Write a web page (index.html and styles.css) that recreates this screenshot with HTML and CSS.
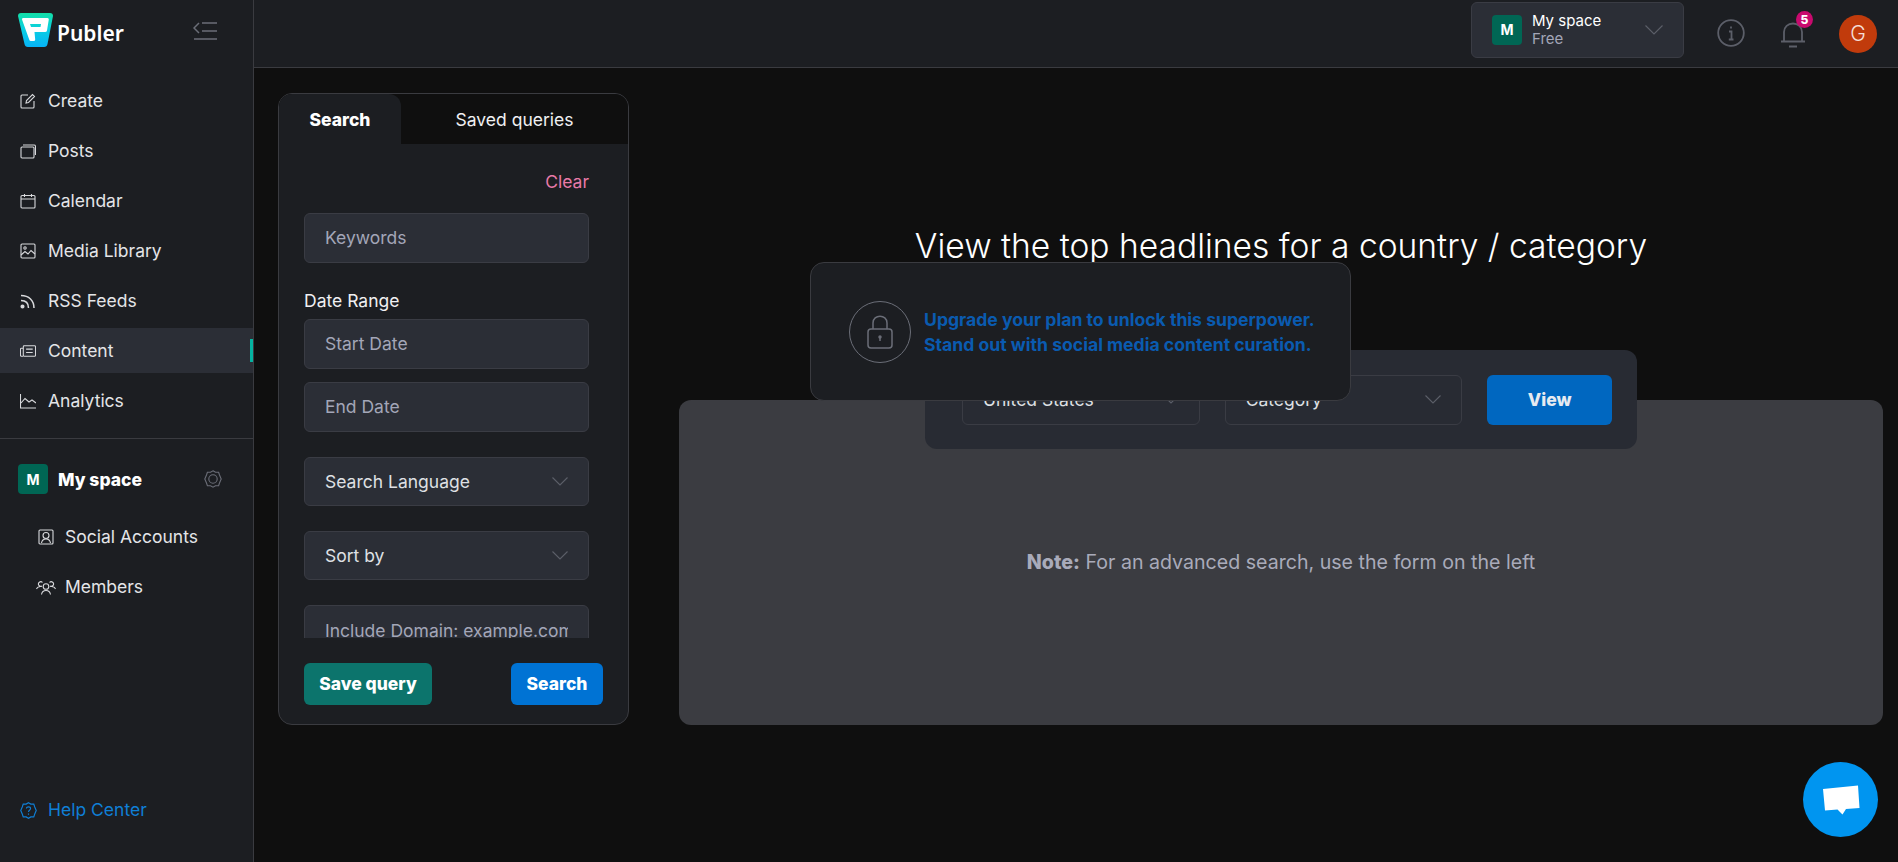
FILE: index.html
```html
<!DOCTYPE html>
<html lang="en">
<head>
	<meta charset="UTF-8">
	<title>Publer - Content</title>
	<link rel="stylesheet" href="styles.css">
</head>
<body>
	<aside class="sidebar">
		<div class="brand">
			<svg class="logo" viewBox="0 0 35 34">
				<defs>
					<linearGradient id="logograd" x1="0" y1="0" x2="0" y2="1">
						<stop offset="0" stop-color="#12dfa6"/>
						<stop offset="0.45" stop-color="#0bd0e0"/>
						<stop offset="1" stop-color="#06b4f8"/>
					</linearGradient>
				</defs>
				<path d="M3 0H32Q35 0 35 3L29.5 31Q29 34 26 34H10Q7 34 6.500 31L0 3Q0 0 3 0Z" fill="url(#logograd)"/>
				<path fill-rule="evenodd" d="M5 5H29.500Q31 5 30.800 6.500L29 17.500Q28.800 19 27 19H16.500L17.200 26.500Q17.300 28 15.500 28H13Q11.500 28 11.200 26.500L4 6.500Q3.800 5 5 5ZM12 11L13 14H22.500L23 11Z" fill="#fff"/>
			</svg>
			<span class="brand-name">Publer</span>
			<svg class="collapse" viewBox="0 0 24 18" fill="none" stroke="#6b6e78" stroke-width="1.500">
				<path d="M6 1L1 6L6 11M9 1H24M9 9H24M1 17H24"/>
			</svg>
		</div>
		<nav class="nav">
			<a class="nav-item">
				<svg class="ico" viewBox="0 0 16 16"><path d="M8 2H2Q1 2 1 3V14Q1 15 2 15H13Q14 15 14 14V8M6 10L6.500 7.500L12.500 1.500L14.500 3.500L8.500 9.500Z"/></svg>
				Create
			</a>
			<a class="nav-item">
				<svg class="ico" viewBox="0 0 16 16"><rect x="1" y="4" width="13" height="11" rx="1"/><path d="M3 2H14Q15.500 2 15.500 3.500V12"/></svg>
				Posts
			</a>
			<a class="nav-item">
				<svg class="ico" viewBox="0 0 16 16"><rect x="1" y="2.500" width="14" height="12.500" rx="1"/><path d="M1 6H15M4.500 1V4M11.500 1V4"/></svg>
				Calendar
			</a>
			<a class="nav-item">
				<svg class="ico" viewBox="0 0 16 16"><rect x="1" y="1" width="14" height="14" rx="1"/><circle cx="5" cy="5" r="1.200"/><path d="M1 12L5 8.500L8 11L11 7.500L15 11"/></svg>
				Media Library
			</a>
			<a class="nav-item">
				<svg class="ico ico-thick" viewBox="0 0 16 16"><circle cx="2.500" cy="13.500" r="1.300" fill="#d8d9dc"/><path d="M1 7.500C6 7.500 8.500 10 8.500 15M1 2.500C9 2.500 14 7.500 14 15"/></svg>
				RSS Feeds
			</a>
			<a class="nav-item active">
				<svg class="ico" viewBox="0 0 17 16"><rect x="3.500" y="2.500" width="13" height="11" rx="1"/><path d="M3.500 5H1.500Q.5 5 .5 6V12.500Q.5 13.500 1.500 13.500H3.500M6.500 6H13.500M6.500 9.500H13.500"/></svg>
				Content
				<span class="marker"></span>
			</a>
			<a class="nav-item">
				<svg class="ico" viewBox="0 0 16 16"><path d="M.5 1V15H16M1 10L5 5.500L9 9L12 7L16 10"/></svg>
				Analytics
			</a>
		</nav>
		<div class="divider"></div>
		<div class="space-row">
			<span class="tile">M</span>
			<span class="space-name">My space</span>
			<svg class="gear" viewBox="0 0 18 18" fill="none" stroke="#6b6e78" stroke-width="1.100">
				<path d="M9 .8L11.500 2.200L14.600 2.300L15.500 5L17.200 9L15.500 13L14.600 15.700L11.500 15.800L9 17.200L6.500 15.800L3.400 15.700L2.500 13L.8 9L2.500 5L3.400 2.300L6.500 2.200Z"/>
				<circle cx="9" cy="9" r="4.200"/>
			</svg>
		</div>
		<nav class="subnav">
			<a class="nav-item">
				<svg class="ico" viewBox="0 0 16 16"><rect x="1" y="1" width="14" height="14" rx="1"/><circle cx="8" cy="6.500" r="3"/><path d="M3.500 14C4 11 6 10 8 10S12 11 12.500 14"/></svg>
				Social Accounts
			</a>
			<a class="nav-item">
				<svg class="ico ico-wide" viewBox="0 0 20 16"><circle cx="10" cy="7.500" r="2.800"/><path d="M5.500 15.500C6 12.500 8 11.500 10 11.500S14 12.500 14.500 15.500M6 7A2.300 2.300 0 1 1 6.500 3.500M14 7A2.300 2.300 0 1 0 13.500 3.500M.5 10C1 8.500 2.500 7.500 4 7.800M19.500 10C19 8.500 17.500 7.500 16 7.800"/></svg>
				Members
			</a>
		</nav>
		<a class="help">
			<svg class="help-ico" viewBox="0 0 18 18" fill="none" stroke="#0f7fd6" stroke-width="1.200">
				<path d="M9 .8L11.500 2.200L14.600 2.300L15.500 5L17.200 9L15.500 13L14.600 15.700L11.500 15.800L9 17.200L6.500 15.800L3.400 15.700L2.500 13L.8 9L2.500 5L3.400 2.300L6.500 2.200Z"/>
				<path d="M6.800 7C6.800 4.500 11.200 4.500 11.200 7C11.200 8.800 9 8.800 9 10.500M9 12.200V13.400"/>
			</svg>
			Help Center
		</a>
	</aside>

	<div class="main">
		<header class="topbar">
			<div class="switcher">
				<span class="tile">M</span>
				<div class="switcher-text">
					<span class="switcher-name">My space</span>
					<span class="switcher-plan">Free</span>
				</div>
				<svg class="chev chev-big" viewBox="0 0 18 10"><path d="M.5 .5L9 9L17.500 .5"/></svg>
			</div>
			<svg class="info" viewBox="0 0 28 28" fill="none" stroke="#5c5f69" stroke-width="1.800">
				<circle cx="14" cy="14" r="12.800"/>
				<path d="M12 12.500H14.500V20M11.800 20.500H16.500M14 7.500V9.500"/>
			</svg>
			<div class="bell">
				<svg class="bell-ico" viewBox="0 0 26 28" fill="none" stroke="#5c5f69" stroke-width="1.800">
					<path d="M1 21.500H25M4 21.500V12C4 7 8 3.500 13 3.500S22 7 22 12V21.500M9 26.500H17"/>
				</svg>
				<span class="badge">5</span>
			</div>
			<span class="avatar">G</span>
		</header>

		<div class="content">
			<section class="panel">
				<div class="tabs">
					<span class="tab tab-on">Search</span>
					<span class="tab">Saved queries</span>
				</div>
				<div class="form">
					<div class="clear-row">Clear</div>
					<div class="field">Keywords</div>
					<div class="label">Date Range</div>
					<div class="field">Start Date</div>
					<div class="field field-next">End Date</div>
					<div class="field field-select">Search Language
						<svg class="chev" viewBox="0 0 16 9"><path d="M.5 .5L8 8L15.500 .5"/></svg>
					</div>
					<div class="field field-select">Sort by
						<svg class="chev" viewBox="0 0 16 9"><path d="M.5 .5L8 8L15.500 .5"/></svg>
					</div>
					<div class="field field-last"><span class="clip">Include Domain: example.com</span></div>
				</div>
				<div class="panel-foot">
					<span class="btn btn-green">Save query</span>
					<span class="btn btn-blue">Search</span>
				</div>
			</section>

			<section class="results">
				<h1 class="headline">View the top headlines for a country / category</h1>
				<div class="filter">
					<div class="pick">United States
						<svg class="chev" viewBox="0 0 16 9"><path d="M.5 .5L8 8L15.500 .5"/></svg>
					</div>
					<div class="pick">Category
						<svg class="chev" viewBox="0 0 16 9"><path d="M.5 .5L8 8L15.500 .5"/></svg>
					</div>
					<span class="btn-view">View</span>
				</div>
				<div class="note-card">
					<p class="note"><b>Note:</b> For an advanced search, use the form on the left</p>
				</div>
				<div class="upgrade">
					<span class="lock">
						<svg class="lock-ico" viewBox="0 0 26 34" fill="none" stroke="#6b6e78" stroke-width="1.500">
							<rect x="1" y="14" width="24" height="19" rx="3"/>
							<path d="M6 14V8C6 -1 20 -1 20 8V14M13 22V26"/>
							<circle cx="13" cy="22" r="1" fill="#6b6e78"/>
						</svg>
					</span>
					<p class="upgrade-text">Upgrade your plan to unlock this superpower.<br>Stand out with social media content curation.</p>
				</div>
			</section>
		</div>
	</div>

	<span class="chat">
		<svg class="chat-ico" viewBox="0 0 38 32"><path d="M1 5L36 1.500L37.500 24L24 25L20.500 30.500L15.500 25.500L3 26.500Z" fill="#fff"/></svg>
	</span>
</body>
</html>
```

FILE: styles.css
```css
*{
	margin: 0;
	padding: 0;
	box-sizing: border-box;
}
body{
	display: flex;
	height: 862px;
	overflow: hidden;
	background-color: #0f0f0f;
	color: #e4e5e8;
	font-family: Inter, "Liberation Sans", sans-serif;
	font-size: 17.5px;
}

/* sidebar */
.sidebar{
	width: 254px;
	flex: none;
	display: flex;
	flex-direction: column;
	background-color: #1c1e22;
	border-right: 1px solid #3a3b40;
}
.brand{
	height: 78px;
	display: flex;
	align-items: flex-start;
	padding: 13px 36px 0 18px;
}
.logo{
	width: 35px;
	height: 34px;
}
.brand-name{
	margin: 7px 0 0 4px;
	font-family: "Noto Sans", sans-serif;
	font-size: 21px;
	line-height: 26px;
	font-weight: 600;
	color: #fff;
}
.collapse{
	width: 24px;
	height: 18px;
	margin: 9px 0 0 auto;
}
.nav{
	display: flex;
	flex-direction: column;
	gap: 5px;
}
.nav-item{
	position: relative;
	height: 45px;
	display: flex;
	align-items: center;
	gap: 12px;
	padding-left: 20px;
	color: #e4e5e8;
}
.active{
	background-color: #2b2e36;
}
.marker{
	position: absolute;
	right: 0;
	top: 11px;
	width: 3px;
	height: 23px;
	background-color: #05b3a0;
}
.ico{
	width: 16px;
	height: 16px;
	flex: none;
	fill: none;
	stroke: #d8d9dc;
	stroke-width: 1.100;
}
.ico-thick{
	stroke-width: 1.500;
}
.ico-wide{
	width: 20px;
	margin: 0 -2px;
}
.divider{
	height: 1px;
	margin-top: 15px;
	background-color: #3a3b40;
}
.space-row{
	display: flex;
	align-items: center;
	margin-top: 25px;
	padding: 0 31px 0 18px;
}
.tile{
	width: 30px;
	height: 30px;
	flex: none;
	display: flex;
	align-items: center;
	justify-content: center;
	background-color: #006654;
	border-radius: 4px;
	color: #fff;
	font-size: 14px;
	font-weight: 700;
}
.space-name{
	margin: 1px 0 0 10px;
	font-weight: 800;
	color: #fff;
}
.gear{
	width: 18px;
	height: 18px;
	margin-left: auto;
}
.subnav{
	display: flex;
	flex-direction: column;
	gap: 5px;
	margin-top: 20px;
}
.subnav .nav-item{
	padding-left: 38px;
	gap: 11px;
}
.help{
	display: flex;
	align-items: center;
	gap: 11px;
	margin-top: auto;
	margin-bottom: 40px;
	padding-left: 20px;
	line-height: 24px;
	color: #0f7fd6;
}
.help-ico{
	width: 17px;
	height: 17px;
}

/* top bar */
.main{
	flex: 1;
	min-width: 0;
	display: flex;
	flex-direction: column;
}
.topbar{
	height: 68px;
	flex: none;
	display: flex;
	align-items: center;
	background-color: #1c1e22;
	border-bottom: 1px solid #3a3b40;
	padding-right: 21px;
}
.switcher{
	width: 213px;
	height: 56px;
	display: flex;
	align-items: center;
	margin-left: auto;
	margin-top: -8px;
	padding: 0 20px;
	background-color: #2b2e36;
	border: 1px solid #3a3c44;
	border-radius: 6px;
}
.switcher-text{
	display: flex;
	flex-direction: column;
	margin-left: 10px;
	font-size: 15px;
	line-height: 18px;
}
.switcher-name{
	color: #fff;
}
.switcher-plan{
	color: #a3a6b8;
}
.chev{
	width: 16px;
	height: 9px;
	margin-left: auto;
	fill: none;
	stroke: #5c5f69;
	stroke-width: 1.100;
}
.chev-big{
	width: 18px;
	height: 10px;
}
.info{
	width: 28px;
	height: 28px;
	margin: -2px 0 0 33px;
}
.bell{
	position: relative;
	width: 26px;
	height: 28px;
	margin: 0 0 0 35px;
}
.bell-ico{
	width: 26px;
	height: 28px;
}
.badge{
	position: absolute;
	top: -9px;
	left: 16px;
	width: 17px;
	height: 17px;
	display: flex;
	align-items: center;
	justify-content: center;
	background-color: #c80a6e;
	border-radius: 50%;
	color: #fff;
	font-size: 12px;
	font-weight: 800;
}
.avatar{
	width: 38px;
	height: 38px;
	margin-left: 33px;
	display: flex;
	align-items: center;
	justify-content: center;
	background-color: #c13b0c;
	border-radius: 50%;
	color: #f5ded6;
	font-size: 21px;
	font-weight: 300;
}

/* page */
.content{
	flex: 1;
	display: flex;
	align-items: flex-start;
	gap: 50px;
	padding: 25px 15px 0 24px;
}
.panel{
	width: 351px;
	height: 632px;
	flex: none;
	display: flex;
	flex-direction: column;
	background-color: #1c1e22;
	border: 1px solid #3a3b40;
	border-radius: 14px;
	overflow: hidden;
}
.tabs{
	height: 50px;
	flex: none;
	display: flex;
	background-color: #0f0f0f;
}
.tab{
	flex: 1;
	display: flex;
	align-items: center;
	justify-content: center;
	padding-top: 1px;
	color: #f0f0f2;
}
.tab-on{
	flex: none;
	width: 122px;
	background-color: #1c1e22;
	border-top-right-radius: 12px;
	font-weight: 800;
	color: #fff;
}
.form{
	height: 494px;
	flex: none;
	overflow: hidden;
	padding: 26px 39px 0 25px;
}
.clear-row{
	line-height: 24px;
	margin-bottom: 19px;
	text-align: right;
	color: #e87aa8;
}
.field{
	height: 50px;
	display: flex;
	align-items: center;
	padding: 0 20px 2px;
	background-color: #2b2e36;
	border: 1px solid #3a3c44;
	border-radius: 6px;
	color: #a3a6b8;
}
.field-next{
	margin-top: 13px;
}
.field-select{
	height: 49px;
	margin-top: 25px;
	padding-bottom: 0;
	color: #dfe0e4;
}
.field-last{
	margin-top: 25px;
	padding-bottom: 0;
}
.clip{
	overflow: hidden;
	white-space: nowrap;
}
.label{
	margin: 26px 0 6px;
	line-height: 24px;
	color: #f0f0f2;
}
.panel-foot{
	display: flex;
	justify-content: space-between;
	margin-top: 25px;
	padding: 0 25px;
}
.btn{
	height: 42px;
	display: flex;
	align-items: center;
	justify-content: center;
	padding-bottom: 2px;
	border-radius: 6px;
	color: #fff;
	font-weight: 800;
}
.btn-green{
	width: 128px;
	background-color: #0c746c;
}
.btn-blue{
	width: 92px;
	background-color: #0073d4;
}

/* right side */
.results{
	position: relative;
	flex: 1;
	min-width: 0;
	display: flex;
	flex-direction: column;
	align-items: center;
}
.headline{
	margin-top: 133px;
	font-size: 33.600px;
	line-height: 40px;
	font-weight: 300;
	color: #fff;
}
.filter{
	position: relative;
	z-index: 1;
	width: 712px;
	height: 99px;
	flex: none;
	display: flex;
	align-items: center;
	gap: 25px;
	margin-top: 84px;
	padding: 0 25px 0 37px;
	background-color: #282b33;
	border-radius: 12px;
}
.pick{
	width: 238px;
	height: 50px;
	display: flex;
	align-items: center;
	padding: 0 20px;
	border: 1px solid #3a3c44;
	border-radius: 6px;
	color: #dfe0e4;
}
.btn-view{
	width: 125px;
	height: 50px;
	display: flex;
	align-items: center;
	justify-content: center;
	background-color: #0067c0;
	border-radius: 6px;
	color: #e6eaf0;
	font-weight: 800;
}
.note-card{
	width: 100%;
	height: 325px;
	flex: none;
	display: flex;
	align-items: center;
	justify-content: center;
	margin-top: -49px;
	padding-bottom: 2px;
	background-color: #3b3c41;
	border-radius: 12px;
}
.note{
	font-size: 19.600px;
	color: #a9abba;
}
.note b{
	font-weight: 800;
}
.upgrade{
	position: absolute;
	z-index: 2;
	left: 131px;
	top: 169px;
	width: 541px;
	height: 139px;
	display: flex;
	align-items: center;
	gap: 13px;
	padding-left: 38px;
	background-color: #1c1e22;
	border: 1px solid #3a3b40;
	border-radius: 14px;
}
.lock{
	width: 62px;
	height: 62px;
	flex: none;
	display: flex;
	align-items: center;
	justify-content: center;
	border: 1px solid #6b6e78;
	border-radius: 50%;
}
.lock-ico{
	width: 26px;
	height: 34px;
}
.upgrade-text{
	font-size: 17.600px;
	line-height: 25px;
	font-weight: 700;
	color: #0a5bb0;
}
.chat{
	position: absolute;
	left: 1803px;
	top: 762px;
	width: 75px;
	height: 75px;
	display: flex;
	align-items: center;
	justify-content: center;
	background-color: #0095f0;
	border-radius: 50%;
}
.chat-ico{
	width: 38px;
	height: 32px;
}
```
